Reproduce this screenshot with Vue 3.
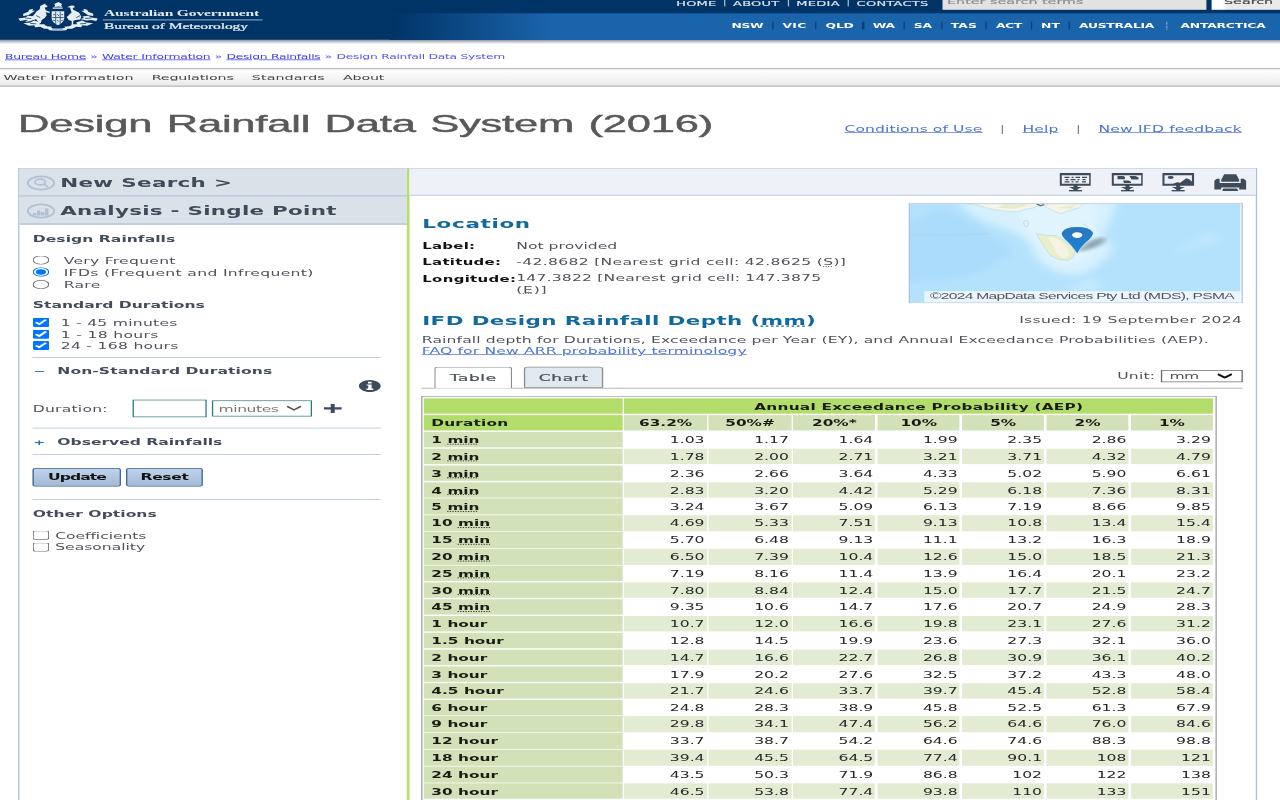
<script setup>
const SX = 1.3

// Spreads the letters of a label so that it fills the given on-screen width.
const vFit = {
  mounted(el, { value }) {
    const n = el.textContent.length
    const w = el.getBoundingClientRect().width
    el.style.letterSpacing = `${(value - w) / n / SX}px`
  },
}

const topLinks = [['HOME', 40], ['ABOUT', 46.5], ['MEDIA', 43.5], ['CONTACTS', 72]]
const regions = [
  ['NSW', 32], ['VIC', 24], ['QLD', 28], ['WA', 22], ['SA', 18], ['TAS', 26],
  ['ACT', 26], ['NT', 19], ['AUSTRALIA', 75], ['ANTARCTICA', 85],
]
const menu = [['Water Information', 130], ['Regulations', 82], ['Standards', 73], ['About', 41]]
const columns = ['63.2%', '50%#', '20%*', '10%', '5%', '2%', '1%']
const rows = [
  ['1', 'min', '1.03 1.17 1.64 1.99 2.35 2.86 3.29'],
  ['2', 'min', '1.78 2.00 2.71 3.21 3.71 4.32 4.79'],
  ['3', 'min', '2.36 2.66 3.64 4.33 5.02 5.90 6.61'],
  ['4', 'min', '2.83 3.20 4.42 5.29 6.18 7.36 8.31'],
  ['5', 'min', '3.24 3.67 5.09 6.13 7.19 8.66 9.85'],
  ['10', 'min', '4.69 5.33 7.51 9.13 10.8 13.4 15.4'],
  ['15', 'min', '5.70 6.48 9.13 11.1 13.2 16.3 18.9'],
  ['20', 'min', '6.50 7.39 10.4 12.6 15.0 18.5 21.3'],
  ['25', 'min', '7.19 8.16 11.4 13.9 16.4 20.1 23.2'],
  ['30', 'min', '7.80 8.84 12.4 15.0 17.7 21.5 24.7'],
  ['45', 'min', '9.35 10.6 14.7 17.6 20.7 24.9 28.3'],
  ['1', 'hour', '10.7 12.0 16.6 19.8 23.1 27.6 31.2'],
  ['1.5', 'hour', '12.8 14.5 19.9 23.6 27.3 32.1 36.0'],
  ['2', 'hour', '14.7 16.6 22.7 26.8 30.9 36.1 40.2'],
  ['3', 'hour', '17.9 20.2 27.6 32.5 37.2 43.3 48.0'],
  ['4.5', 'hour', '21.7 24.6 33.7 39.7 45.4 52.8 58.4'],
  ['6', 'hour', '24.8 28.3 38.9 45.8 52.5 61.3 67.9'],
  ['9', 'hour', '29.8 34.1 47.4 56.2 64.6 76.0 84.6'],
  ['12', 'hour', '33.7 38.7 54.2 64.6 74.6 88.3 98.8'],
  ['18', 'hour', '39.4 45.5 64.5 77.4 90.1 108 121'],
  ['24', 'hour', '43.5 50.3 71.9 86.8 102 122 138'],
  ['30', 'hour', '46.5 53.8 77.4 93.8 110 133 151'],
].map(([n, unit, v]) => ({ n, unit, values: v.split(' ') }))
</script>

<template>
  <div class="viewport">
    <div class="page">
      <header class="banner">
        <svg class="crest" viewBox="0 0 80 30" preserveAspectRatio="none">
          <g fill="#e8eef5">
            <path d="M36 2l2-1 2-1 2 1 2 1-1 1.500 1 1.500-4-.5-4 .5 1-1.500z" />
            <path d="M34.500 5.500h10v1.500h-10z" />
            <path d="M22 4l3-1.500 2-1 .5 1.500 2 1-1 1.200-2 .3 1 3 4 1.500v1.200l-4-.7 1 3-2 3-3 2-1 3-3 1v-3l-2-2-5 2-6 1 5-3 4-4 3-4 3-2 .5-3z" />
            <path d="M57 5l-2-1.500-3 .2-3 1.500 3 .3.5 3 1 2 -3 3-2 2 2 3 3 1v4h1.500v-4l2-1 5-.5 1-3-2-4-4-2-2-1-.5-2z" />
            <path d="M33.500 9.500h12.500v7.500q-1 5-6.300 7q-5.200-2-6.200-7z" />
            <path d="M5 12l5-2 1-2 4-1-1 2 3 0-4 2.500-3 2-5 1zM0 17l7-1 3-2 6 1-2 1.500 4 1-6 1.500-5-.5-5 1zM5 22l7-1 4-2 6 2-1 2 5 0 3 2 5 .5-2 2-6 0-4-2-5 .5-1-2-5 .5z" />
            <path d="M75 12l-5-2-1-2-4-1 1 2-3 0 4 2.500 3 2 5 1zM80 17l-7-1-3-2-6 1 2 1.500-4 1 6 1.500 5-.5 5 1zM75 22l-7-1-4-2-6 2 1 2-5 0-3 2-5 .5 2 2 6 0 4-2 5 .5 1-2 5 .5z" />
            <path d="M29 26.500q11 1 21 0l-2 2.500q-8.500 1.200-17 0z" />
          </g>
          <g stroke="#0d3d6e" stroke-width=".8" fill="none">
            <path d="M37.500 10v13M42 10v13M34 16h11.500M35 13h2M43 13h2M39 12.500l2 2M35 19h2M39 19l2 1M43 19h1.500M34 27.700h11" />
            <path d="M7 16.500l6 .5M73 16.500l-6 .5M12 22l6 .5M68 22l-6 .5M27 24l6-2M53 24l-6-2M18 14l4 2M62 14l-4 2" />
          </g>
        </svg>
        <div class="brand">
          <div class="gov"><span v-fit="155">Australian Government</span></div>
          <div class="bom"><span v-fit="144">Bureau of Meteorology</span></div>
        </div>
        <div class="banner-nav">
          <div class="top-row">
            <template v-for="([t, w], i) in topLinks" :key="t">
              <i v-if="i" class="bar"></i><span v-fit="w">{{ t }}</span>
            </template>
            <div class="search-box">Enter search terms</div>
            <div class="search-btn">Search</div>
          </div>
          <nav class="regions">
            <template v-for="([t, w], i) in regions" :key="t">
              <i v-if="i" class="sep" :class="{ dotted: i === 9 }"></i><span v-fit="w">{{ t }}</span>
            </template>
          </nav>
        </div>
      </header>
      <div class="banner-edge"></div>

      <div class="crumbs">
        <a v-fit="81">Bureau Home</a><i>»</i><a v-fit="108.5">Water Information</a><i>»</i><a v-fit="94">Design Rainfalls</a><i>»</i><span v-fit="168.5">Design Rainfall Data System</span>
      </div>
      <nav class="menu"><span v-for="[t, w] in menu" :key="t" v-fit="w">{{ t }}</span></nav>

      <div class="title-row">
        <h1><span v-fit="695">Design Rainfall Data System (2016)</span></h1>
        <div class="links">
          <a v-fit="138">Conditions of Use</a><i>|</i><a v-fit="36">Help</a><i>|</i><a v-fit="143.5">New IFD feedback</a>
        </div>
      </div>

      <main class="panel">
        <aside>
          <div class="head">
            <svg viewBox="0 0 30 16" preserveAspectRatio="none" class="head-ico">
              <ellipse cx="15" cy="8" rx="13.200" ry="6.600" /><ellipse cx="14.200" cy="7" rx="5.200" ry="2.900" /><path d="M18 9.200l4 2.600" />
            </svg>
            <span v-fit="172">New Search &gt;</span>
          </div>
          <div class="head">
            <svg viewBox="0 0 30 16" preserveAspectRatio="none" class="head-ico">
              <ellipse cx="15" cy="8" rx="13.200" ry="6.600" /><path class="bars" d="M7 12.500V10h3.500v2.500zM11 12.500V7.500h3.500v5zM15 12.500V9h3.500v3.500zM19 12.500V5.500h3.500v7z" />
            </svg>
            <span v-fit="276.5">Analysis - Single Point</span>
          </div>
          <div class="form">
            <h4 class="h-design"><span v-fit="142.500">Design Rainfalls</span></h4>
            <label class="radio"><input type="radio" name="set"><span v-fit="112">Very Frequent</span></label>
            <label class="radio"><input type="radio" name="set" checked><span v-fit="250">IFDs (Frequent and Infrequent)</span></label>
            <label class="radio"><input type="radio" name="set"><span v-fit="37">Rare</span></label>
            <h4 class="h-standard"><span v-fit="172">Standard Durations</span></h4>
            <label class="check"><input type="checkbox" checked><span v-fit="117">1 - 45 minutes</span></label>
            <label class="check"><input type="checkbox" checked><span v-fit="98">1 - 18 hours</span></label>
            <label class="check"><input type="checkbox" checked><span v-fit="118">24 - 168 hours</span></label>
            <div class="custom">
              <h4><b>−</b><span v-fit="215">Non-Standard Durations</span></h4>
              <svg class="info" viewBox="0 0 22 12" preserveAspectRatio="none">
                <ellipse cx="11" cy="6" rx="11" ry="6" fill="#3c4a5c" /><path fill="#fff" d="M9.200 1.600h3.600v1.700H9.200zM7.800 4.300h5v4.200h1.600v1.300H7.600V8.500h1.800V5.500H7.800z" />
              </svg>
              <div class="duration">
                <span class="dur-label"><span v-fit="75">Duration:</span></span>
                <input class="dur-input">
                <div class="dur-select"><span v-fit="60">minutes</span>
                  <svg viewBox="0 0 16 6" preserveAspectRatio="none"><path d="M1 1l7 3.600L15 1" fill="none" stroke="#555" stroke-width="1.600" /></svg>
                </div>
                <svg class="plus" viewBox="0 0 18 9" preserveAspectRatio="none"><path d="M7 0h4v3.300h7v2.400h-7V9H7V5.700H0V3.300h7z" fill="#3c4a5c" /></svg>
              </div>
            </div>
            <div class="observed"><h4><b>+</b><span v-fit="165">Observed Rainfalls</span></h4></div>
            <div class="buttons">
              <button class="update"><span v-fit="58">Update</span></button>
              <button class="reset"><span v-fit="48">Reset</span></button>
            </div>
            <h4 class="h-other"><span v-fit="124">Other Options</span></h4>
            <label class="opt"><input type="checkbox"><span v-fit="91">Coefficients</span></label>
            <label class="opt"><input type="checkbox"><span v-fit="90">Seasonality</span></label>
          </div>
        </aside>

        <section>
          <div class="tools">
            <svg viewBox="0 0 32 19" preserveAspectRatio="none">
              <path d="M1.200 1.200h29.600v11h-29.600z" class="o" /><path class="d" d="M5 4.500h5M12 4.500h2M16 4.500h4.500M22.500 4.500h5M6 6.800h3M11 6.800h5M18 6.800h2M23 6.800h3M5 9.200h5M12 9.200h2M16 9.200h3M22.500 9.200h4" /><path class="f" d="M14 12h4v2.600h4.500L18 16.800v.8h4.500V19h-13v-1.400H14v-.8l-4.500-2.200H14z" />
            </svg>
            <svg viewBox="0 0 32 19" preserveAspectRatio="none">
              <path d="M1.200 1.200h29.600v11h-29.600z" class="o" /><path class="f" d="M6 3.200h6l1.500 1.300v2H6zM18 3.200h6l3 1.500v2h-7zM11.500 7.800H17l2.500 1.200v1.500h-7zM14 12h4v2.600h4.500L18 16.800v.8h4.500V19h-13v-1.400H14v-.8l-4.500-2.200H14z" />
            </svg>
            <svg viewBox="0 0 32 19" preserveAspectRatio="none">
              <path d="M1.200 1.200h29.600v11h-29.600z" class="o" /><ellipse class="f" cx="8.500" cy="4.800" rx="3" ry="1.500" /><path class="f" d="M9 12l6-2.500 3 .5 6-4.500 3 1 4 3.500v2zM14 12h4v2.600h4.500L18 16.800v.8h4.500V19h-13v-1.400H14v-.8l-4.500-2.200H14z" />
            </svg>
            <svg viewBox="0 0 32 19" preserveAspectRatio="none">
              <path class="f" d="M10 1.500h12l3 5.500v2H7V7zM2.500 6h3v4.500h21V6h3L32 8v9h-7v-2H7v2H0V8zM9 16h14l1 2.500H8z" />
            </svg>
          </div>

          <div class="content">
            <div class="location">
              <div class="facts">
                <h2><span v-fit="108.5">Location</span></h2>
                <dl>
                  <dt><span v-fit="53">Label:</span></dt><dd><span v-fit="101">Not provided</span></dd>
                  <dt><span v-fit="79">Latitude:</span></dt><dd><span v-fit="330">-42.8682 [Nearest grid cell: 42.8625 (<abbr>S</abbr>)]</span></dd>
                  <dt><span v-fit="94">Longitude:</span></dt><dd class="two"><span v-fit="305">147.3822 [Nearest grid cell: 147.3875</span><br><span v-fit="31">(<abbr>E</abbr>)]</span></dd>
                </dl>
              </div>
              <div class="map">
                <svg viewBox="0 0 332 99" preserveAspectRatio="none">
                  <defs>
                    <filter id="soft"><feGaussianBlur stdDeviation="5 3" /></filter>
                    <filter id="shade"><feGaussianBlur stdDeviation="3 1.500" /></filter>
                    <linearGradient id="pin" x2="0" y2="1"><stop offset="0" stop-color="#2a76bd" /><stop offset="1" stop-color="#1c83d6" /></linearGradient>
                  </defs>
                  <rect width="332" height="99" fill="#b4e2fd" />
                  <g filter="url(#soft)">
                    <path d="M-5 20L35 4l40 22 30 24-48 24-62 5z" fill="#abdcfb" />
                    <path d="M42-8L210-8Q202 20 193 32Q212 45 192 58Q178 76 150 70Q122 59 122 42Q112 30 88 23Q62 16 42-8z" fill="#d6f0fe" />
                    <path d="M100-5L188-5Q185 22 184 48Q170 65 145 60Q126 42 120 30z" fill="#e0f4fe" />
                    <path d="M155 88l22-14 17 5-10 16zM265 50l35-20 14 5M205 60l14 3" fill="#c2e8fd" />
                  </g>
                  <path d="M56 0l14 2 14 4 17 2 8 0 6-2 10-2 7-4zM136 3l10 5 6 2 8-3 10-3 4-4h-35z" fill="#f6f3e7" stroke="#b4d8e8" stroke-width=".6" />
                  <path d="M88 4l17 1 12-3v-2H96zM148 4l14 1 5-4z" fill="#e6edcc" />
                  <path d="M127 0l4 2 4-1" fill="none" stroke="#777" stroke-width="1.300" />
                  <path d="M127 30l11 2 9 0 8 5 8 6 3 6-2 5-5 3-10-1-8-4-5-7-5-8z" fill="#e9eecb" stroke="#b6dce0" stroke-width=".7" />
                  <path d="M138 33l12 3 8 8 2 8-5 3-8-5-3-8z" fill="#f7f3e4" />
                  <path d="M114 19q2-4 5-1v4q-3 2-4 0zM173 20l4 2 2 4M0 31q40 2 80-1" fill="none" stroke="#b3cfdb" stroke-width=".6" />
                  <path d="M168 48q12-14 28-14q2 8-24 14z" fill="#68808c" opacity=".65" filter="url(#shade)" />
                  <path d="M168 50Q164 43 156 36Q151 31 153 28.500Q156 23.500 168 23.500Q180 23.500 183.500 28.500Q185 31 180 36Q171 43 168 50z" fill="url(#pin)" />
                  <ellipse cx="168" cy="31.500" rx="5.200" ry="2.900" fill="#fff" />
                </svg>
                <div class="credit"><span v-fit="304">©2024 MapData Services Pty Ltd (MDS), PSMA</span></div>
              </div>
            </div>

            <div class="ifd-head">
              <h2><span v-fit="394">IFD Design Rainfall Depth (<abbr>mm</abbr>)</span></h2>
              <span class="issued" v-fit="223">Issued: 19 September 2024</span>
            </div>
            <div class="desc"><span v-fit="787">Rainfall depth for Durations, Exceedance per Year (EY), and Annual Exceedance Probabilities (AEP).</span></div>
            <div class="faq"><a v-fit="325">FAQ for New ARR probability terminology</a></div>

            <div class="tabs">
              <div class="tab active"><span v-fit="47">Table</span></div>
              <div class="tab chart"><span v-fit="50">Chart</span></div>
              <div class="unit">
                <span v-fit="38">Unit:</span>
                <div class="unit-select"><span v-fit="29">mm</span>
                  <svg viewBox="0 0 16 6" preserveAspectRatio="none"><path d="M1 1l7 3.500L15 1" fill="none" stroke="#111" stroke-width="2" /></svg>
                </div>
              </div>
            </div>

            <div class="table">
              <div class="top"></div>
              <div class="top span"><span v-fit="329">Annual Exceedance Probability (AEP)</span></div>
              <div class="top name"><span v-fit="77">Duration</span></div>
              <div v-for="c in columns" :key="c" class="col">{{ c }}</div>
              <template v-for="(r, i) in rows" :key="i">
                <div class="name">{{ r.n }}&nbsp;<abbr v-if="r.unit === 'min'">min</abbr><template v-else>hour</template></div>
                <div v-for="(v, j) in r.values" :key="j" class="num" :class="{ alt: i % 2 }">{{ v }}</div>
              </template>
            </div>
          </div>
        </section>
      </main>
    </div>
  </div>
</template>

<style>
body { margin: 0; background: #fff; overflow: hidden; }
</style>

<style scoped>
.viewport { width: 1280px; height: 800px; overflow: hidden; background: #fff; }
/* --x and --y are one screen pixel across and down inside the scaled page */
.page {
  --x: calc(1px / 1.3);
  --y: calc(1px / 0.7);
  width: calc(1280 * var(--x));
  height: calc(800 * var(--y));
  overflow: hidden;
  transform: scale(1.3, 0.7);
  transform-origin: 0 0;
  font: 12px "DejaVu Sans", Verdana, sans-serif;
  color: #4f525a;
  white-space: nowrap;
}
.page * { box-sizing: border-box; }
svg { display: block; flex: none; }
span { display: inline-block; }
i { font-style: normal; }
h1, h2, h4, dl, dd, dt { margin: 0; }
input { margin: 0; flex: none; }

.banner { display: flex; height: calc(40 * var(--y)); background: #003366; }
.crest { width: calc(80 * var(--x)); height: calc(29 * var(--y)); margin: calc(2 * var(--y)) 0 0 calc(18 * var(--x)); }
.brand { width: calc(159 * var(--x)); margin-left: calc(5 * var(--x)); color: #e3e9f0; font-family: "Liberation Serif", serif; font-weight: bold; font-size: 12px; }
.gov, .bom { display: flex; align-items: center; padding-left: calc(1 * var(--x)); }
.gov { height: calc(20 * var(--y)); padding-top: calc(8.5 * var(--y)); border-bottom: calc(1 * var(--y)) solid #dbe3ec; }
.bom { height: calc(13.5 * var(--y)); font-weight: normal; -webkit-text-stroke: .35px #e3e9f0; }
.banner-nav { margin-left: auto; width: calc(890 * var(--x)); }
.top-row { height: calc(13 * var(--y)); display: flex; justify-content: flex-end; align-items: flex-start; color: #dfe7ef; font-size: 10px; line-height: calc(6.5 * var(--y)); background: #003366; -webkit-text-stroke: .2px; }
.bar { width: calc(1 * var(--x)); height: calc(6.5 * var(--y)); margin: 0 calc(7.900 * var(--x)); background: #a9bacb; }
.search-box { width: calc(264 * var(--x)); height: calc(10 * var(--y)); margin-left: calc(13.5 * var(--x)); padding-left: calc(5 * var(--x)); background: #e2e2e2; color: #8c8c8c; font-size: 11px; line-height: calc(4.5 * var(--y)); }
.search-btn { width: calc(69 * var(--x)); height: calc(10 * var(--y)); margin-left: calc(5 * var(--x)); padding-left: calc(13 * var(--x)); background: linear-gradient(90deg, #fff 0 16%, #eaeaea 22%); color: #444; font-size: 11px; line-height: calc(4.5 * var(--y)); }
.regions { height: calc(27 * var(--y)); padding-right: calc(14.5 * var(--x)); display: flex; align-items: center; justify-content: flex-end; font-size: 9.5px; font-weight: bold; color: #fff; background: linear-gradient(90deg, #003366 0, #1a64ab 18%); padding-bottom: calc(2 * var(--y)); }
.sep { width: calc(1.5 * var(--x)); height: calc(8 * var(--y)); margin: 0 calc(8.800 * var(--x)); background: #0d3f75; }
.sep.dotted { background: none; border-left: calc(1.3 * var(--x)) dotted #a8c4e0; margin: 0 calc(12.5 * var(--x)); }
.banner-edge { height: calc(4 * var(--y)); background: linear-gradient(#8c959f, #c9cdd2 50%, #fff); }

.crumbs { height: calc(24 * var(--y)); display: flex; align-items: center; padding-left: calc(5 * var(--x)); padding-top: calc(1 * var(--y)); font-size: 9.5px; color: #5353f2; }
.crumbs a { color: #3b3bf0; text-decoration: underline; display: inline-block; }
.crumbs i { width: calc(16 * var(--x)); text-align: center; }
.menu { height: calc(18.500 * var(--y)); display: flex; align-items: center; gap: calc(18.2 * var(--x)); padding-left: calc(3.5 * var(--x)); border-top: calc(1.5 * var(--y)) solid #bfbfbf; border-bottom: calc(1.5 * var(--y)) solid #b9b9b9; background: linear-gradient(#fff, #ebebeb); font-size: 11px; color: #444; }

.title-row { height: calc(81.5 * var(--y)); display: flex; justify-content: space-between; padding: 0 calc(38 * var(--x)) 0 calc(18 * var(--x)); }
h1 { font: 33.5px/1 "Liberation Sans", Arial, sans-serif; line-height: calc(74.500 * var(--y)); color: #58595b; -webkit-text-stroke: .6px #58595b; word-spacing: 2px; }
.links { line-height: calc(84 * var(--y)); display: flex; font-size: 12px; color: #8a8377; }
.links a, .faq a { display: inline-block; color: #4a73d2; text-decoration: underline; }
.links i { width: calc(40 * var(--x)); text-align: center; }

.panel { display: flex; margin-left: calc(18 * var(--x)); width: calc(1239 * var(--x)); height: calc(700 * var(--y)); border: 1px solid #a9bfd8; }
aside { width: calc(390 * var(--x)); border-right: 2px solid #b4e063; flex: none; }
.head { height: calc(28 * var(--y)); display: flex; align-items: center; background: #dae1e9; border-bottom: 2px solid #b3c4d8; font-size: 16.500px; font-weight: bold; color: #404a59; padding-left: calc(7 * var(--x)); padding-top: calc(1.800 * var(--y)); }
.head-ico { width: calc(30 * var(--x)); height: calc(16 * var(--y)); margin-right: calc(4 * var(--x)); fill: none; stroke: #b1c1d3; stroke-width: 1.800; }
.head-ico .bars { fill: #b1c1d3; stroke: none; }
.form { padding: calc(1 * var(--y)) calc(26 * var(--x)) 0 calc(13.5 * var(--x)); }
h4 { display: flex; align-items: center; font-size: 12px; color: #434c5b; }
.h-design { height: calc(19 * var(--y)); margin-top: calc(4 * var(--y)); margin-bottom: calc(6 * var(--y)); }
label { display: flex; align-items: center; }
label input { position: relative; top: calc(-1 * var(--y)); }
.radio { height: calc(12.300 * var(--y)); }
.radio input { margin-right: calc(14 * var(--x)); }
.h-standard { height: calc(19 * var(--y)); margin-top: calc(4.5 * var(--y)); margin-bottom: calc(3 * var(--y)); }
.check { height: calc(11.3 * var(--y)); }
.check input { margin-right: calc(11 * var(--x)); }
.custom { height: calc(71.500 * var(--y)); margin-top: calc(4.9 * var(--y)); border-top: 1px solid #a9bdd4; border-bottom: 1px solid #a9bdd4; }
.custom h4 { height: calc(27.500 * var(--y)); }
h4 b { width: calc(24.5 * var(--x)); padding-left: calc(.5 * var(--x)); color: #1b76ad; font-size: 11px; }
.info { width: calc(22 * var(--x)); height: calc(12 * var(--y)); margin: calc(-5 * var(--y)) 0 calc(7 * var(--y)) auto; }
.duration { display: flex; align-items: center; height: calc(19 * var(--y)); margin-top: calc(1 * var(--y)); }
.dur-label { width: calc(99.500 * var(--x)); }
.dur-input { width: calc(74.500 * var(--x)); height: calc(17 * var(--y)); border: calc(1.4 * var(--x)) solid #2e7a80; border-radius: 0; background: #fff; }
.dur-select { display: flex; align-items: center; justify-content: space-between; width: calc(100 * var(--x)); height: calc(16 * var(--y)); margin: 0 calc(12.500 * var(--x)) 0 calc(5 * var(--x)); padding: 0 calc(8 * var(--x)) 0 calc(5.500 * var(--x)); border: calc(1.4 * var(--x)) solid #2e7a80; color: #777; }
.dur-select svg, .unit-select svg { width: calc(16 * var(--x)); height: calc(6 * var(--y)); }
.plus { width: calc(18 * var(--x)); height: calc(9 * var(--y)); }
.observed { height: calc(27 * var(--y)); border-bottom: 1px solid #a9bdd4; }
.observed h4 { height: calc(28 * var(--y)); }
.buttons { display: flex; gap: calc(5 * var(--x)); height: calc(44.500 * var(--y)); padding-top: calc(13 * var(--y)); border-bottom: 1px solid #a9bdd4; }
button { height: calc(18.500 * var(--y)); padding: 0; border: calc(1.8 * var(--x)) solid #2c578c; border-radius: 2px; background: linear-gradient(#bed2ec, #a3b9d3); color: #111; font: bold 12px "DejaVu Sans", sans-serif; }
.update { width: calc(88.500 * var(--x)); }
.reset { width: calc(76.500 * var(--x)); }
.h-other { height: calc(19 * var(--y)); margin-top: calc(5 * var(--y)); margin-bottom: calc(6.500 * var(--y)); }
.opt { height: calc(11.600 * var(--y)); }
.opt input { margin-right: calc(5.500 * var(--x)); }

section { flex: 1; min-width: 0; }
.tools { height: calc(27.500 * var(--y)); display: flex; justify-content: flex-end; gap: calc(19.700 * var(--x)); padding: calc(4.500 * var(--y)) calc(9.500 * var(--x)) 0 0; background: #eef2f8; border-bottom: 2px solid #c9d7e6; }
.tools svg { width: calc(32 * var(--x)); height: calc(18.500 * var(--y)); }
.o { fill: none; stroke: #3f4b5a; stroke-width: 2.200; }
.d { fill: none; stroke: #3f4b5a; stroke-width: 1.300; }
.f { fill: #3f4b5a; }
.content { padding: 0 calc(13.500 * var(--x)) 0 calc(12 * var(--x)); }
.location { display: flex; justify-content: space-between; height: calc(110 * var(--y)); padding-top: calc(7 * var(--y)); }
.facts { padding-left: calc(1 * var(--x)); }
h2 { font-size: 16.500px; color: #106a9f; line-height: calc(24 * var(--y)); }
.facts h2 { height: calc(35.800 * var(--y)); line-height: calc(42 * var(--y)); }
dl { display: grid; grid-template-columns: calc(94 * var(--x)) auto; grid-template-rows: calc(15.900 * var(--y)) calc(15.900 * var(--y)) auto; line-height: calc(15.800 * var(--y)); }
dt { font-weight: bold; color: #111; font-size: 11.500px; }
.two { line-height: calc(10.700 * var(--y)); padding-top: calc(3.200 * var(--y)); }
dl > dt:last-of-type { padding-top: calc(.6 * var(--y)); }
abbr { text-decoration: underline dotted; }
.map { position: relative; width: calc(333 * var(--x)); height: calc(100 * var(--y)); border: calc(1.4 * var(--x)) solid #acc4da; overflow: hidden; }
.map svg { width: 100%; height: 100%; }
.credit { position: absolute; right: 0; bottom: 0; width: calc(316 * var(--x)); height: calc(11 * var(--y)); padding-left: calc(5 * var(--x)); background: rgba(255, 255, 255, .7); font: 12px "Liberation Sans", sans-serif; line-height: calc(10.500 * var(--y)); color: #555; }
.ifd-head { display: flex; justify-content: space-between; height: calc(27.500 * var(--y)); padding-left: calc(1 * var(--x)); line-height: calc(28 * var(--y)); }
.ifd-head h2 { line-height: calc(31 * var(--y)); }
.desc, .faq { height: calc(11.500 * var(--y)); line-height: calc(13 * var(--y)); padding-left: calc(.5 * var(--x)); }
.faq { line-height: calc(12 * var(--y)); }
.tabs { display: flex; align-items: flex-end; height: calc(31.500 * var(--y)); padding-left: calc(13 * var(--x)); border-bottom: 1px solid #999; }
.tab { display: flex; justify-content: center; align-items: center; height: calc(20.500 * var(--y)); width: calc(78 * var(--x)); padding-top: calc(1 * var(--y)); border: 1px solid #8c8c8c; border-radius: 3px 3px 0 0; color: #4b535e; font-size: 13px; -webkit-text-stroke: .3px #4b535e; }
.tab.active { background: #fff; border-bottom-color: #fff; margin-bottom: -1px; height: calc(21.500 * var(--y)); }
.tab.chart { width: calc(79 * var(--x)); margin-left: calc(12 * var(--x)); background: #e2e8ef; }
.unit { display: flex; align-items: center; margin-left: auto; height: calc(12 * var(--y)); margin-bottom: calc(5.500 * var(--y)); }
.unit-select { display: flex; align-items: center; justify-content: space-between; width: calc(81 * var(--x)); height: calc(12 * var(--y)); margin-left: calc(6 * var(--x)); padding: 0 calc(8 * var(--x)) 0 calc(7 * var(--x)); border: 1px solid #666; }

.table {
  display: grid;
  width: calc(795.500 * var(--x));
  margin-top: calc(8.300 * var(--y));
  padding: calc(1.100 * var(--y)) calc(1.800 * var(--x));
  border: 1px solid #a0a0a0;
  grid-template-columns: calc(198 * var(--x)) repeat(7, calc(82.200 * var(--x)));
  grid-auto-rows: calc(15.630 * var(--y));
  gap: calc(1.120 * var(--y)) calc(2.200 * var(--x));
  line-height: calc(17.100 * var(--y));
  color: #262626;
}
.table > div { height: 100%; }
.top, .name, .col { font-weight: bold; color: #181c14; background: #d3e1b8; font-size: 11.800px; }
.table .top { background: #b3dd6b; }
.span { grid-column: 2 / -1; text-align: center; }
.name { padding-left: calc(7 * var(--x)); }
.name abbr { text-underline-offset: 1px; }
.col { text-align: center; }
.num { text-align: right; padding-right: calc(2.200 * var(--x)); }
.num.alt { background: #e3ecd3; }
</style>
